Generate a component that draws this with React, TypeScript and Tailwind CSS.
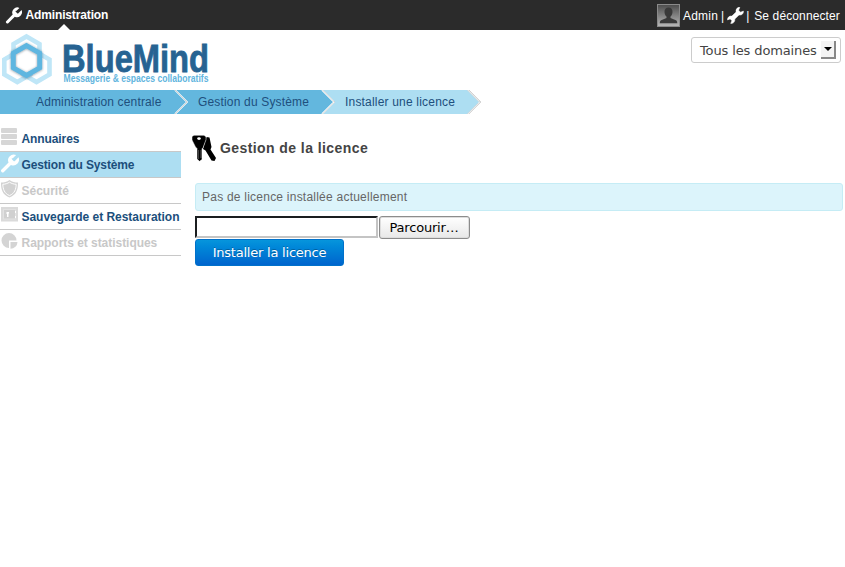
import React from "react";

const sans = "font-['Liberation_Sans',Arial,sans-serif]";
const deja = "font-['DejaVu_Sans',Verdana,sans-serif]";

function Wrench({ className, fill = "#fff" }: { className: string; fill?: string }) {
  return (
    <svg viewBox="2 2 20 20" className={className} fill={fill}>
      <path d="M14.7 6.3a1 1 0 0 0 0 1.4l1.6 1.6a1 1 0 0 0 1.4 0l3.77-3.77a6 6 0 0 1-7.94 7.94l-7.4 7.4a1.6 1.6 0 0 1-2.5-2.5l7.400-7.400a6 6 0 0 1 7.94-7.94l-3.76 3.76z" />
    </svg>
  );
}

function DoubleWrench() {
  return (
    <svg width="17" height="17" viewBox="0 0 17 17" className="ml-[3px] block" fill="#fff" stroke="#fff" strokeWidth="0.500">
      <path d="M12.800.4 11.600 3.200 13.500 5.200 16.400 4.100C16.800 6.500 14.800 8.600 12 8L7.800 12.100C8.200 14.800 6 17 3.700 16.400L4.900 13.700 3.200 11.900.5 12.900C.2 10.700 2.300 8.500 4.900 9.100L9.100 5C8.500 2.300 10.400 0 12.800.4z" />
    </svg>
  );
}

function Logo() {
  return (
    <svg width="220" height="60" viewBox="0 30 220 60" className="block overflow-visible">
      <defs>
        <filter id="shade" x="-20%" y="-20%" width="140%" height="140%">
          <feDropShadow dx="0" dy="0.4" stdDeviation="0.8" floodColor="#234" floodOpacity="0.55" />
        </filter>
      </defs>
      <g fill="none" stroke="#bfe6f7" strokeWidth="4.600">
        <path d="M26.500 36.500 39.500 44V59L26.500 66.500 13.500 59V44Z" />
        <path d="M17.300 52 30.300 59.500V74.500L17.300 82 4.300 74.500V59.500Z" />
        <path d="M36.500 52 49.500 59.500V74.500L36.500 82 23.500 74.500V59.500Z" />
      </g>
      <path fill="#fff" d="M26.500 45.500 39.800 53V68L26.500 75.500 13.200 68V53Z" />
      <path d="M26.500 45.600 39.700 53.100V67.900L26.500 75.400 13.300 67.900V53.100Z" fill="none" stroke="#5fb6e0" strokeWidth="4.900" filter="url(#shade)" />
      <text x="62" y="71.500" textLength="147" lengthAdjust="spacingAndGlyphs" fontFamily="Liberation Sans Narrow, Liberation Sans, sans-serif" fontWeight="700" fontSize="38" fill="#276392" stroke="#276392" strokeWidth="0.800">BlueMind</text>
      <text x="63.500" y="82" textLength="145" lengthAdjust="spacingAndGlyphs" fontFamily="Liberation Sans Narrow, Liberation Sans, sans-serif" fontWeight="700" fontSize="11" fill="#62b5de">Messagerie &amp; espaces collaboratifs</text>
    </svg>
  );
}

function Avatar() {
  return (
    <svg width="23" height="23" viewBox="0 0 23 23" className="block">
      <defs>
        <linearGradient id="avatar" x1="0" y1="0" x2="0" y2="1">
          <stop offset="0" stopColor="#4b4b4b" />
          <stop offset="1" stopColor="#b8b8b8" />
        </linearGradient>
      </defs>
      <rect x="0.500" y="0.500" width="22" height="22" fill="url(#avatar)" stroke="#8a8a8a" />
      <path d="M11.500 3.500c2.800 0 4 1.700 4 4.200 0 2-.8 3.800-2 4.800v1.500l5.500 2.300c1 .5 1.300 1.500 1.300 3H2.800c0-1.500.3-2.500 1.300-3L9.500 14v-1.500c-1.200-1-2-2.800-2-4.800 0-2.500 1.200-4.200 4-4.200z" fill="#393939" />
    </svg>
  );
}

function Servers() {
  return (
    <svg width="17" height="18" viewBox="0 0 17 18" fill="#d6d6d6">
      <rect x="1" y="0" width="16" height="5" rx="1" />
      <rect x="1" y="6" width="16" height="5" rx="1" />
      <rect x="1" y="12" width="16" height="5" rx="1" />
    </svg>
  );
}

function Shield() {
  return (
    <svg width="18" height="18" viewBox="0 0 18 18">
      <path d="M9.500 0C7 2 4 2.500 1 2.500 1 9 2 14.500 9.500 17.500 17 14.500 18 9 18 2.500 15 2.500 12 2 9.500 0z" fill="#d2d2d2" />
      <path d="M9.500 2.200C7.500 3.600 5 4.200 2.800 4.300 3 9.300 4.300 13.300 9.500 15.600 14.700 13.300 16 9.300 16.200 4.300 14 4.200 11.500 3.600 9.500 2.200z" fill="none" stroke="#fff" strokeWidth="1" />
    </svg>
  );
}

function Safe() {
  return (
    <svg width="18" height="17" viewBox="0 0 18 17">
      <rect x="1" y="1" width="17" height="14.500" fill="#dadada" />
      <rect x="3.500" y="3.500" width="12" height="9.500" fill="#d0d0d0" stroke="#e2e2e2" />
      <path d="M6.500 6H9v1.500h-.5V11H7V8h-.5zM15 5h1v2h-1zM15 10h1v2h-1z" fill="#fff" />
    </svg>
  );
}

function Pie() {
  return (
    <svg width="18" height="18" viewBox="0 0 18 18" fill="#d4d4d4">
      <path d="M9 8.500V16A7.500 7.500 0 1 1 16.500 8.500z" />
      <path d="M10.500 10H17.500A7 7 0 0 1 10.500 16.800z" />
    </svg>
  );
}

function Keys() {
  return (
    <svg width="26" height="27" viewBox="0 0 26 27" className="block">
      <path d="M15.500 2 18.500 2.500 20.500 12 19.500 14.500 25 23 23.500 26 20.500 25.500 14.500 15.500 12 14 13.500 9z" />
      <path d="M1 1.500 3 .3h10l2 1.500v3l-3 8-1 1v10.700L8.500 26.300 6 24V13.500l-1.500-1.500L1 5z" stroke="#fff" strokeWidth="0.500" />
      <ellipse cx="8" cy="3.600" rx="1.800" ry="1.400" fill="#fff" />
      <path d="M7.600 15v9" stroke="#666" strokeWidth="0.700" />
      <path d="m10.500 15-1 1 1 1-1 1 1 1-1 1 1 1-1 1 1 1" stroke="#999" strokeWidth="0.600" fill="none" />
    </svg>
  );
}

const crumbs = [
  { label: "Administration centrale", box: "w-[187px] pl-9", text: "tracking-[0.15px]" },
  { label: "Gestion du Système", box: "w-[147px] pl-[11px]", text: "tracking-[0.17px]" },
  { label: "Installer une licence", box: "w-[147px] pl-[11px]", text: "tracking-[0.19px]" },
];

function Breadcrumb() {
  return (
    <nav className="relative flex h-6 w-[482px] text-[12px] leading-6 text-[#204f7d]">
      <svg width="482" height="24" className="absolute inset-0">
        <path d="M0 0H322L334 12 322 24H0z" fill="#63b7de" />
        <path d="M322 0H467L479 12 467 24H322L334 12z" fill="#addef2" />
        <path d="M175 0 187 12 175 24M322 0 334 12 322 24" fill="none" stroke="#fff" strokeWidth="1.700" />
        <path d="M175 0 187 12 175 24M322.500 0 334.500 12 322.500 24M467.500 0 479.500 12 467.500 24M469 0 481 12 469 24" fill="none" stroke="#999" strokeWidth="0.900" strokeDasharray="0.700 0.700" />
      </svg>
      {crumbs.map((c) => (
        <span key={c.label} className={`relative whitespace-nowrap ${c.box} ${c.text}`}>{c.label}</span>
      ))}
    </nav>
  );
}

const menu = [
  { label: "Annuaires", icon: <Servers />, row: "text-[#1c4f7c] tracking-[-0.1px]" },
  { label: "Gestion du Système", icon: <Wrench className="size-[19px]" />, row: "bg-[#addef2] text-[#1c4f7c] tracking-[-0.14px]" },
  { label: "Sécurité", icon: <Shield />, row: "text-[#c8c8c8]" },
  { label: "Sauvegarde et Restauration", icon: <Safe />, row: "text-[#1c4f7c] tracking-[-0.03px]" },
  { label: "Rapports et statistiques", icon: <Pie />, row: "text-[#c8c8c8] tracking-[-0.04px]" },
];

export default function App() {
  return (
    <div className={`h-[567px] w-[845px] overflow-hidden bg-white text-[12px] ${sans}`}>
      <header className="flex h-[30px] items-center bg-[#2b2b2b] text-white">
        <div className="relative flex h-full items-center pl-[5px]">
          <Wrench className="size-[17px]" />
          <span className="ml-[3.500px] font-bold tracking-[-0.14px]">Administration</span>
          <svg width="12" height="6" className="absolute bottom-0 left-[58px]"><path d="M0 6 6 0 12 6z" fill="#fff" /></svg>
        </div>
        <div className="ml-auto flex items-center pr-[5px] pt-px">
          <Avatar />
          <span className="ml-[3px] w-[35px] tracking-[0.2px]">Admin</span>
          <span className="ml-[3px]">|</span>
          <DoubleWrench />
          <span className="ml-[2px]">|</span>
          <span className="ml-[5px] tracking-[0.12px]">Se déconnecter</span>
        </div>
      </header>
      <div className="flex h-[60px] justify-between">
        <Logo />
        <div className={`mr-1 mt-[7px] flex h-[26px] w-[150px] items-center rounded-[3px] border border-[#ccc] pl-2 text-[13px] text-[#444] ${deja}`}>
          <span className="whitespace-nowrap pt-0.5 tracking-[-0.12px]">Tous les domaines</span>
          <span className="ml-auto mr-1 flex h-[18px] w-[15px] items-center justify-center border-b-2 border-r-2 border-[#888] bg-[#f4f4f4]">
            <svg width="8" height="4"><path d="M0 0H8L4 4z" fill="#000" /></svg>
          </span>
        </div>
      </div>
      <Breadcrumb />
      <div className="flex">
        <aside className="w-[181px] pt-3">
          {menu.map((m) => (
            <div key={m.label} className={`flex h-[26px] border-b border-[#c8c8c8] ${m.row}`}>
              <span className="w-[21.500px] shrink-0 pt-0.5">{m.icon}</span>
              <span className="whitespace-nowrap font-bold leading-[26px]">{m.label}</span>
            </div>
          ))}
        </aside>
        <main className="flex-1 pl-[14px] pr-0.5">
          <div className="-ml-1 mt-[21px] flex h-[27px] items-center">
            <Keys />
            <h1 className="ml-[3px] whitespace-nowrap pb-px text-[14px] font-bold tracking-[0.42px] text-[#444]">Gestion de la licence</h1>
          </div>
          <p className="mt-[21px] h-7 rounded-[3px] border border-[#c5ecf5] bg-[#dcf4fb] pl-1.5 leading-[26px] tracking-[0.23px] text-[#666]">Pas de licence installée actuellement</p>
          <div className={`mt-[5px] flex text-[13px] ${deja}`}>
            <input className="h-[22px] w-[183px] border-2 border-b-[#c4c4c4] border-l-[#1b1e20] border-r-[#c4c4c4] border-t-[#1b1e20] bg-white outline-none" />
            <button className="ml-px h-[23px] w-[91px] rounded-[3px] border border-[#8c8c8c] bg-gradient-to-b from-white to-[#e8e8e8] pr-px tracking-[-0.2px] text-black shadow-[inset_0_0_0_1px_#ddd]">Parcourir…</button>
          </div>
          <button className={`block h-[27px] w-[149px] rounded-[3px] border border-[#0071ca] bg-gradient-to-b from-[#0795dc] to-[#0064cd] text-[13px] tracking-[-0.22px] text-white [text-shadow:0_-1px_0_rgba(0,0,0,0.25)] ${deja}`}>Installer la licence</button>
        </main>
      </div>
    </div>
  );
}
